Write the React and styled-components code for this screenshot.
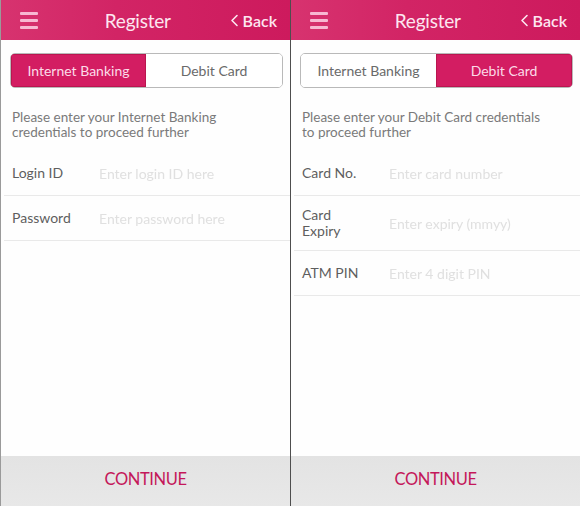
import React from 'react';
import styled, { createGlobalStyle } from 'styled-components';

const GlobalStyle = createGlobalStyle`
  html, body {
    margin: 0;
    padding: 0;
    background: #ffffff;
  }
  body {
    font-family: Lato, "Open Sans", "Liberation Sans", sans-serif;
  }
`;

const Page = styled.div`
  display: flex;
  width: 580px;
  height: 506px;
  overflow: hidden;
`;

const Screen = styled.div`
  display: flex;
  flex-direction: column;
  width: 289px;
  flex-shrink: 0;
  background: #fefefe;
  border-left: ${props => (props.edge ? '1px solid #9a9a9a' : 'none')};
`;

const Divider = styled.div`
  width: 1px;
  flex-shrink: 0;
  background: #4e4e4e;
`;

const Header = styled.div`
  display: flex;
  align-items: center;
  height: 40px;
  padding: 0 13px 0 19px;
  background: linear-gradient(90deg, #d7336f 0%, #d22465 40%, #cd1a5d 100%);
  box-sizing: border-box;
`;

const Burger = styled.div`
  display: flex;
  flex-direction: column;
  gap: 4px;
  width: 18px;
  span {
    height: 3px;
    border-radius: 1px;
    background: #f7b8d2;
  }
`;

const Title = styled.div`
  flex: 1;
  text-align: center;
  padding-left: 8px;
  color: #fde6f0;
  font-size: 19px;
  letter-spacing: -0.2px;
`;

const Back = styled.div`
  display: flex;
  align-items: center;
  gap: 4px;
  color: #fde6f0;
  font-size: 16px;
  font-weight: 600;
`;

const Segmented = styled.div`
  display: flex;
  width: 273px;
  height: 35px;
  margin: 13px 0 0 9px;
  border-radius: 5px;
  overflow: hidden;
  box-sizing: border-box;
  border: 1px solid #b9b9b9;
`;

const Segment = styled.div`
  display: flex;
  align-items: center;
  justify-content: center;
  width: ${props => props.width}px;
  font-size: 14px;
  background: ${props => (props.active ? '#d31d62' : '#ffffff')};
  color: ${props => (props.active ? '#fcdbe8' : '#6a6a6a')};
  box-shadow: ${props => (props.active ? 'inset 0 0 0 1px #b9164f' : 'none')};
`;

const Body = styled.div`
  flex: 1;
  display: flex;
  flex-direction: column;
`;

const Hint = styled.p`
  margin: 22px 0 11px;
  padding: 0 12px 0 11px;
  font-size: 13.5px;
  line-height: 15px;
  color: #7a7a7a;
`;

const Row = styled.div`
  display: flex;
  align-items: center;
  min-height: 45px;
  margin-left: 3px;
  padding: 11px 0 11px 8px;
  box-sizing: border-box;
  border-bottom: 1px solid #e9e9e9;
`;

const Label = styled.div`
  width: 87px;
  flex-shrink: 0;
  font-size: 14px;
  line-height: 16px;
  color: #5e5e5e;
`;

const Placeholder = styled.div`
  font-size: 14px;
  color: #e0e0e0;
  filter: blur(0.5px);
`;

const Footer = styled.div`
  display: flex;
  align-items: center;
  justify-content: center;
  height: 50px;
  padding-bottom: 4px;
  box-sizing: border-box;
  background: linear-gradient(180deg, #e3e3e3, #e8e8e8);
  color: #c4185a;
  font-size: 16.5px;
  letter-spacing: -0.4px;
`;

function BackChevron() {
  return (
    <svg width="9" height="13" viewBox="0 0 9 13">
      <polyline
        points="7,1.5 2,6.5 7,11.5"
        fill="none"
        stroke="#fde6f0"
        strokeWidth="1.6"
        strokeLinecap="round"
        strokeLinejoin="round"
      />
    </svg>
  );
}

function RegisterScreen({ edge, mode, hint, fields }) {
  return (
    <Screen edge={edge}>
      <Header>
        <Burger>
          <span />
          <span />
          <span />
        </Burger>
        <Title>Register</Title>
        <Back>
          <BackChevron />
          Back
        </Back>
      </Header>
      <Segmented>
        <Segment width={136} active={mode === 'netbanking'}>
          Internet Banking
        </Segment>
        <Segment width={137} active={mode === 'debit'}>
          Debit Card
        </Segment>
      </Segmented>
      <Body>
        <Hint>{hint}</Hint>
        {fields.map(f => (
          <Row key={f.id}>
            <Label>{f.label}</Label>
            <Placeholder>{f.placeholder}</Placeholder>
          </Row>
        ))}
      </Body>
      <Footer>CONTINUE</Footer>
    </Screen>
  );
}

export default function App() {
  return (
    <>
      <GlobalStyle />
      <Page>
        <RegisterScreen
          edge
          mode="netbanking"
          hint={
            <>
              Please enter your Internet Banking
              <br />
              credentials to proceed further
            </>
          }
          fields={[
            { id: 'login', label: 'Login ID', placeholder: 'Enter login ID here' },
            { id: 'pass', label: 'Password', placeholder: 'Enter password here' }
          ]}
        />
        <Divider />
        <RegisterScreen
          mode="debit"
          hint={
            <>
              Please enter your Debit Card credentials
              <br />
              to proceed further
            </>
          }
          fields={[
            { id: 'card', label: 'Card No.', placeholder: 'Enter card number' },
            {
              id: 'expiry',
              label: (
                <>
                  Card
                  <br />
                  Expiry
                </>
              ),
              placeholder: 'Enter expiry (mmyy)'
            },
            { id: 'pin', label: 'ATM PIN', placeholder: 'Enter 4 digit PIN' }
          ]}
        />
      </Page>
    </>
  );
}
